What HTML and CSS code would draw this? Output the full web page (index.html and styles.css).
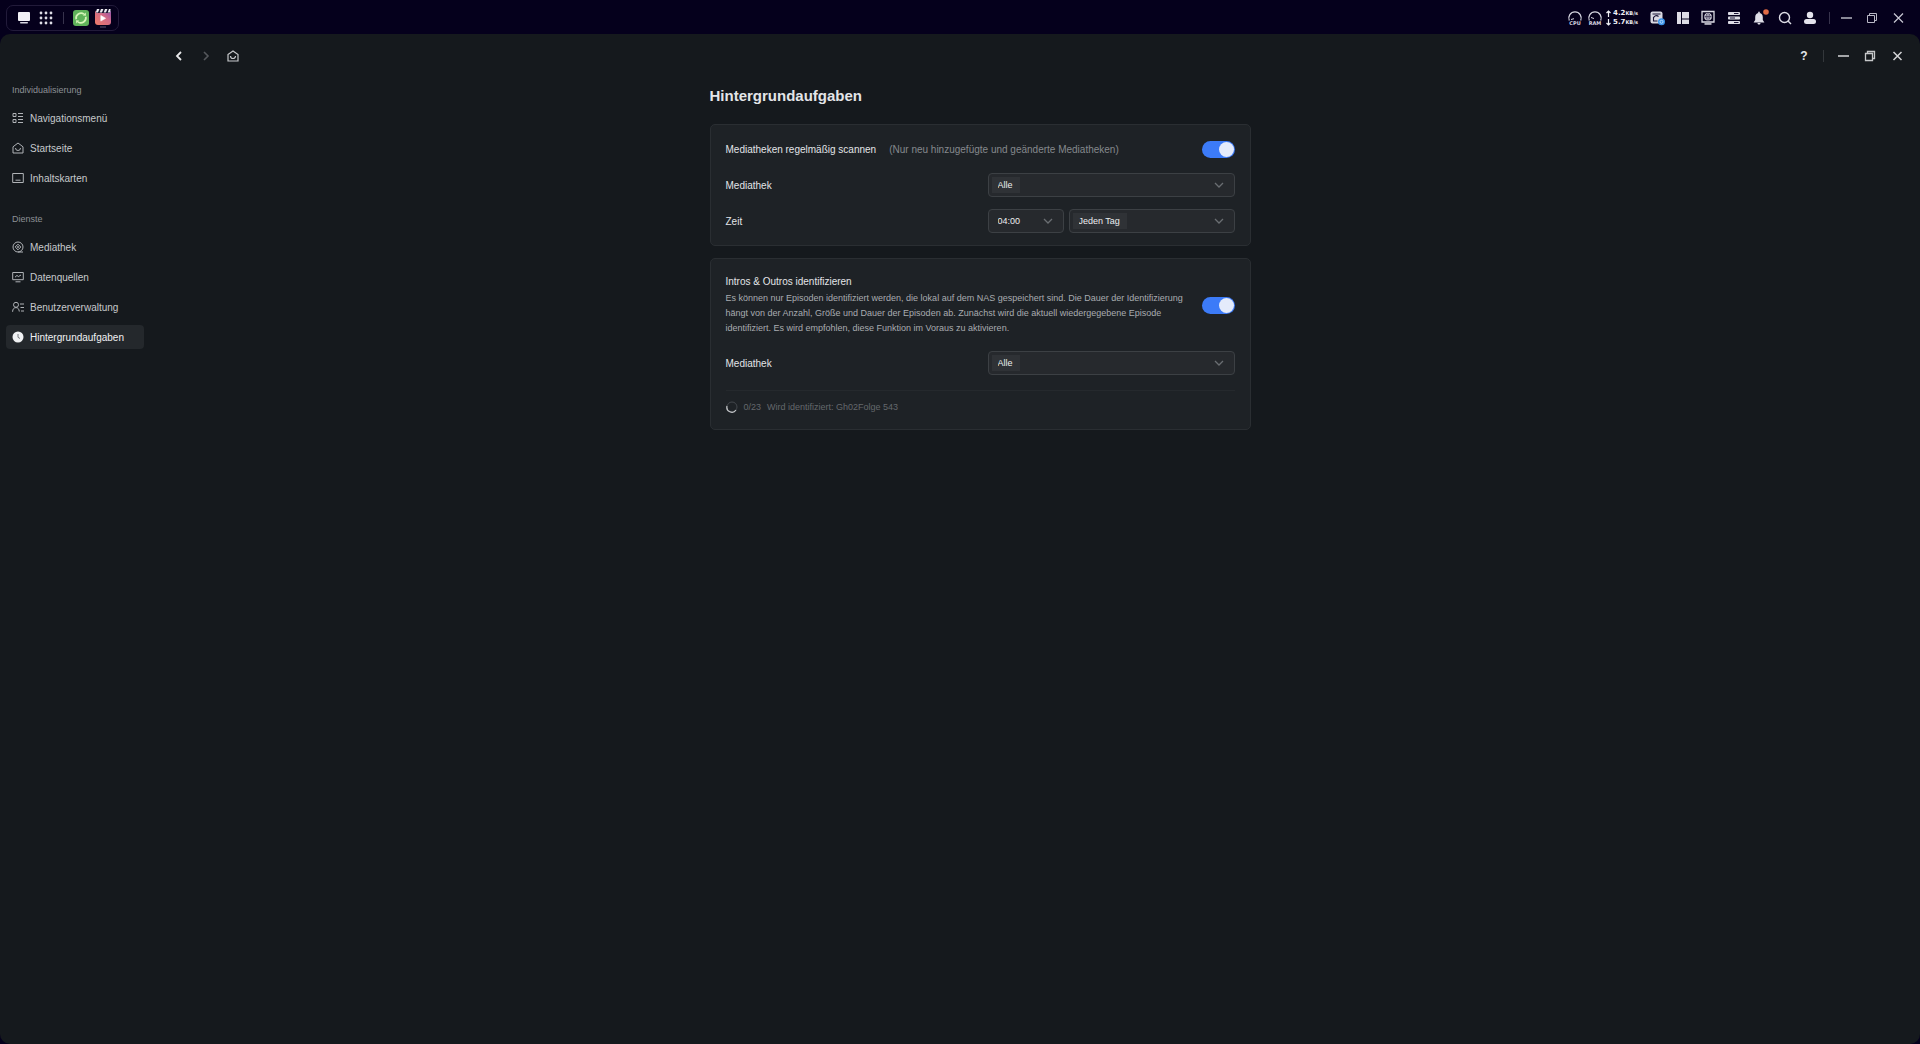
FILE: index.html
```html
<!DOCTYPE html>
<html lang="de">
<head>
<meta charset="utf-8">
<meta name="viewport" content="width=device-width, initial-scale=1">
<title>Hintergrundaufgaben</title>
<link rel="stylesheet" href="styles.css">
</head>
<body>
<header class="taskbar">
  <nav class="dock" aria-label="Dock">
    <button class="icon-btn" aria-label="Desktop"><svg width="14" height="14" viewBox="0 0 14 14"><rect x="1" y="1" width="12" height="9" rx="1" fill="#f1f0f5"/><rect x="3" y="11" width="8" height="1.4" rx=".7" fill="#d9d8e2"/></svg></button>
    <button class="icon-btn" aria-label="Apps"><svg width="14" height="14" viewBox="0 0 14 14" fill="#dedde6"><circle cx="2" cy="2" r="1.4"/><circle cx="7" cy="2" r="1.4"/><circle cx="12" cy="2" r="1.4"/><circle cx="2" cy="7" r="1.4"/><circle cx="7" cy="7" r="1.4"/><circle cx="12" cy="7" r="1.4"/><circle cx="2" cy="12" r="1.4"/><circle cx="7" cy="12" r="1.4"/><circle cx="12" cy="12" r="1.4"/></svg></button>
    <span class="divider"></span>
    <button class="icon-btn" aria-label="Synchronisierung"><svg width="16" height="16" viewBox="0 0 16 16"><rect width="16" height="16" rx="3" fill="#5fb35a"/><g fill="none" stroke="#d5f5b8" stroke-width="1.7"><path d="M3.2 9.2A5 5 0 0 1 11 4.1"/><path d="M12.8 6.8A5 5 0 0 1 5 11.9"/></g><path d="M9.8 5.6l3.2.2-.3-3.3zM6.2 10.4l-3.2-.2.3 3.3z" fill="#d5f5b8"/></svg></button>
    <button class="icon-btn" aria-label="Video"><svg width="16" height="20" viewBox="0 0 16 20"><defs><linearGradient id="clip" x1="0" y1="1" x2="1" y2="0"><stop offset="0" stop-color="#f07a68"/><stop offset=".6" stop-color="#d06a88"/><stop offset="1" stop-color="#8c4fb0"/></linearGradient></defs><rect y="2" width="16" height="15" rx="3" fill="url(#clip)"/><path d="M1 1h14v4H1z" fill="#17102c"/><path d="M2 1h2.4L3 4.6H.8zM6 1h2.400L7 4.600H4.700zM10 1h2.400L11 4.600H8.700zM14 1h1.600l-.4 3.600h-2.500z" fill="#ececf0"/><path d="M5.800 7.500v5.600l4.800-2.800z" fill="#fff" stroke="#fff" stroke-linejoin="round" stroke-width=".6"/><rect x="5" y="18.500" width="6" height="1" fill="#5a5570"/></svg></button>
  </nav>
  <div class="tray">
    <div class="meters">
      <svg width="16" height="16" viewBox="0 0 16 16"><path d="M2.300 10.500A6.200 6.200 0 1 1 13.700 10.500" fill="none" stroke="#d6d5e0" stroke-width="1.300"/><path d="M4 9.500l3-.8" stroke="#d6d5e0"/><text x="8" y="15" class="meter-text">CPU</text></svg>
      <svg width="16" height="16" viewBox="0 0 16 16"><path d="M2.300 10.500A6.200 6.200 0 1 1 13.700 10.500" fill="none" stroke="#d6d5e0" stroke-width="1.300"/><path d="M4 7.500l3 1" stroke="#d6d5e0"/><text x="8" y="15" class="meter-text">RAM</text></svg>
    </div>
    <div class="net">
      <div class="net-row"><svg width="5" height="7" viewBox="0 0 5 7"><path d="M2.500 7V1M.5 3l2-2 2 2" fill="none" stroke="#f0f0f5" stroke-width="1.200"/></svg><span>4.2<small>KB/s</small></span></div>
      <div class="net-row"><svg width="5" height="7" viewBox="0 0 5 7"><path d="M2.500 0v6M.5 4l2 2 2-2" fill="none" stroke="#f0f0f5" stroke-width="1.200"/></svg><span>5.7<small>KB/s</small></span></div>
    </div>
    <div class="tray-icons">
      <button class="icon-btn" aria-label="Speicher"><svg width="16" height="16" viewBox="0 0 16 16"><rect x="1.500" y="1.500" width="12" height="12" rx="2" fill="#d9d8e2"/><path d="M3.500 4h8M4.500 8a3 3 0 0 1 5-1.500M4.500 7v4h4" fill="none" stroke="#1b1436" stroke-width="1.100"/><circle cx="12.500" cy="11.800" r="3.500" fill="#3b93ea"/><circle cx="12.500" cy="11.800" r="1.500" fill="none" stroke="#b9dcff"/></svg></button>
      <button class="icon-btn" aria-label="Layout"><svg width="16" height="16" viewBox="0 0 16 16" fill="#dedde6"><rect x="2" y="2" width="4" height="12"/><rect x="7" y="2" width="7" height="6.500"/><rect x="7" y="9.500" width="7" height="4.500"/></svg></button>
      <button class="icon-btn" aria-label="Fernzugriff"><svg width="16" height="16" viewBox="0 0 16 16"><path d="M2 1.500h12v10.500H2z" fill="none" stroke="#dedde6" stroke-width="1.300"/><rect x="4.500" y="13.200" width="7" height="1.500" fill="#dedde6"/><circle cx="8" cy="6.700" r="3.800" fill="#dedde6"/><path d="M4.500 6.700h7M8 3v7.500M6.500 4q-1 2.700 0 5.400M9.500 4q1 2.700 0 5.400" fill="none" stroke="#1b1436" stroke-width=".7"/></svg></button>
      <button class="icon-btn" aria-label="Aufgaben"><svg width="16" height="16" viewBox="0 0 16 16" fill="#dedde6"><rect x="2" y="2" width="12" height="3" rx=".8"/><rect x="2" y="6.500" width="12" height="3" rx=".8"/><rect x="2" y="11" width="12" height="3" rx=".8"/><path d="M8 3.500h4.500M4 8h5M8 12.500h4.500" stroke="#1b1436"/></svg></button>
      <button class="icon-btn" aria-label="Benachrichtigungen"><svg width="20" height="20" viewBox="-2 0 20 20"><path d="M8 5c2.500 0 3.800 1.700 3.800 4.200v2.800l1.600 2.500H2.600L4.200 12V9.200C4.200 6.700 5.500 5 8 5zM7.200 3.800h1.600v2H7.200zM6.500 15h3c0 2-3 2-3 0z" fill="#dedde6"/><circle cx="15" cy="4" r="2.800" fill="#df6a45"/></svg></button>
      <button class="icon-btn" aria-label="Suche"><svg width="16" height="16" viewBox="0 0 16 16" fill="none" stroke="#dedde6" stroke-width="1.400"><circle cx="7.500" cy="7.500" r="5"/><path d="M11 11l3 3"/></svg></button>
      <button class="icon-btn" aria-label="Konto"><svg width="16" height="16" viewBox="0 0 16 16" fill="#e4e3ec"><circle cx="8" cy="5" r="3.200"/><rect x="2" y="9" width="12" height="5" rx="2.500"/></svg></button>
    </div>
    <span class="divider"></span>
    <div class="window-actions">
      <button class="icon-btn" aria-label="Minimieren"><svg width="16" height="16" viewBox="0 0 16 16"><path d="M3 8h11" stroke="#d3d2dc" stroke-width="1.300"/></svg></button>
      <button class="icon-btn" aria-label="Wiederherstellen"><svg width="16" height="16" viewBox="0 0 16 16" fill="none" stroke="#b9b8c6"><path d="M3.500 5.500h7v7h-7zM5.500 5.500v-2h7v7h-2"/></svg></button>
      <button class="icon-btn" aria-label="Schließen"><svg width="16" height="16" viewBox="0 0 16 16"><path d="M4 3.500l9 9M13 3.500l-9 9" stroke="#c9c8d4" stroke-width="1.200"/></svg></button>
    </div>
  </div>
</header>

<div class="window">
  <aside class="sidebar">
    <h2 class="group-title">Individualisierung</h2>
    <ul class="menu">
      <li><a class="menu-item" href="#nav"><svg class="menu-icon" viewBox="0 0 12 12"><path d="M1 1.500h3v3H1zM1 7.500h3v3H1zM6 1.500h5M6 4.500h5M6 7.500h5M6 10.500h5"/></svg>Navigationsmenü</a></li>
      <li><a class="menu-item" href="#home"><svg class="menu-icon" viewBox="0 0 12 12"><path d="M1 4.800L6 1l5 3.800V11H1zM3.500 6a2.500 2.500 0 0 0 5 0"/></svg>Startseite</a></li>
      <li><a class="menu-item" href="#cards"><svg class="menu-icon" viewBox="0 0 12 12"><path d="M.7 1.500h10.600v9H.7zM3.500 8.200h5"/></svg>Inhaltskarten</a></li>
    </ul>
    <h2 class="group-title">Dienste</h2>
    <ul class="menu">
      <li><a class="menu-item" href="#library"><svg class="menu-icon" viewBox="0 0 12 12"><circle cx="6" cy="6" r="5"/><path d="M6 3.200L8.800 6 6 8.800 3.200 6zM6 11h5"/><circle cx="6" cy="6" r=".6"/></svg>Mediathek</a></li>
      <li><a class="menu-item" href="#sources"><svg class="menu-icon" viewBox="0 0 12 12"><path d="M.7 1.500h10.600v7.200H.7zM3.500 10.800h5M3 6.200l2-1.800 1.300 1.200L9 4"/></svg>Datenquellen</a></li>
      <li><a class="menu-item" href="#users"><svg class="menu-icon" viewBox="0 0 12 12"><circle cx="4" cy="3.800" r="2.500"/><path d="M.6 10.800c0-2.800 1.400-4.200 3.400-4.200S7 8 7.300 10.500M8 3h4M8.500 6.500H12M9 10h3"/></svg>Benutzerverwaltung</a></li>
      <li><a class="menu-item active" href="#tasks" aria-current="page"><svg class="menu-icon" viewBox="0 0 12 12"><circle cx="6" cy="6" r="5.500" fill="#f0f1f3" stroke="none"/><path d="M6 3v3.300l2 1.200" stroke="#777b80"/></svg>Hintergrundaufgaben</a></li>
    </ul>
  </aside>

  <div class="pane">
    <div class="toolbar">
      <div class="history">
        <button class="icon-btn" aria-label="Zurück"><svg width="16" height="16" viewBox="0 0 16 16" fill="none" stroke="#e8e9eb" stroke-width="1.800"><path d="M10 4L6 8l4 4"/></svg></button>
        <button class="icon-btn" aria-label="Vor" disabled><svg width="16" height="16" viewBox="0 0 16 16" fill="none" stroke="#55585c" stroke-width="1.600"><path d="M6 4l4 4-4 4"/></svg></button>
        <button class="icon-btn" aria-label="Startseite"><svg width="16" height="16" viewBox="0 0 16 16" fill="none" stroke="#c6c8cb" stroke-width="1.200"><path d="M3 6.500L8 3l5 3.500V13H3zM5.500 8a2.500 2.500 0 0 0 5 0"/></svg></button>
      </div>
      <div class="app-actions">
        <button class="icon-btn help" aria-label="Hilfe">?</button>
        <span class="divider"></span>
        <button class="icon-btn" aria-label="Minimieren"><svg width="16" height="16" viewBox="0 0 16 16"><path d="M3 8h11" stroke="#d5d6d8" stroke-width="1.500"/></svg></button>
        <button class="icon-btn" aria-label="Wiederherstellen"><svg width="16" height="16" viewBox="0 0 16 16" fill="none" stroke="#c6c8ca" stroke-width="1.300"><path d="M3.500 5.500h7v7h-7zM5.500 5.500v-2h7v7h-2"/></svg></button>
        <button class="icon-btn" aria-label="Schließen"><svg width="16" height="16" viewBox="0 0 16 16"><path d="M4.500 4l8 8M12.500 4l-8 8" stroke="#d5d6d8" stroke-width="1.500"/></svg></button>
      </div>
    </div>

    <main class="scroller">
      <div class="content">
        <h1 class="title">Hintergrundaufgaben</h1>

        <section class="card">
          <div class="row">
            <div class="label-line"><label class="label" for="scan">Mediatheken regelmäßig scannen</label><span class="hint">(Nur neu hinzugefügte und geänderte Mediatheken)</span></div>
            <input class="switch" type="checkbox" role="switch" id="scan" checked>
          </div>
          <div class="row">
            <label class="label" for="scan-lib">Mediathek</label>
            <div class="fields">
              <div class="field"><select class="select tag-short" id="scan-lib"><option>Alle</option></select><svg class="chevron" viewBox="0 0 10 6"><path d="M1 1l4 4 4-4"/></svg></div>
            </div>
          </div>
          <div class="row">
            <label class="label" for="scan-time">Zeit</label>
            <div class="fields">
              <div class="field time"><select class="select" id="scan-time"><option>04:00</option></select><svg class="chevron" viewBox="0 0 10 6"><path d="M1 1l4 4 4-4"/></svg></div>
              <div class="field"><select class="select tag-long" aria-label="Wochentage"><option>Jeden Tag</option></select><svg class="chevron" viewBox="0 0 10 6"><path d="M1 1l4 4 4-4"/></svg></div>
            </div>
          </div>
        </section>

        <section class="card intros">
          <div class="row">
            <div>
              <label class="label" for="intros">Intros &amp; Outros identifizieren</label>
              <p class="description">Es können nur Episoden identifiziert werden, die lokal auf dem NAS gespeichert sind. Die Dauer der Identifizierung hängt von der Anzahl, Größe und Dauer der Episoden ab. Zunächst wird die aktuell wiedergegebene Episode identifiziert. Es wird empfohlen, diese Funktion im Voraus zu aktivieren.</p>
            </div>
            <input class="switch" type="checkbox" role="switch" id="intros" checked>
          </div>
          <div class="row">
            <label class="label" for="intro-lib">Mediathek</label>
            <div class="fields">
              <div class="field"><select class="select tag-short" id="intro-lib"><option>Alle</option></select><svg class="chevron" viewBox="0 0 10 6"><path d="M1 1l4 4 4-4"/></svg></div>
            </div>
          </div>
          <div class="status" role="status">
            <svg width="12" height="12" viewBox="0 0 12 12" fill="none"><circle cx="6" cy="6" r="5" stroke="#43474c"/><path d="M1 5A5 5 0 0 0 10 9" stroke="#c4c6c9" stroke-width="1.200"/></svg>
            <span>0/23</span><span>Wird identifiziert: Gh02Folge 543</span>
          </div>
        </section>
      </div>
    </main>
  </div>
</div>
</body>
</html>
```
FILE: styles.css
```css
* { box-sizing: border-box; }

body {
  margin: 0;
  min-height: 100vh;
  display: flex;
  flex-direction: column;
  background: #05001c;
  color: #e3e5e8;
  font-family: "Liberation Sans", Arial, sans-serif;
  font-size: 10px;
}

h1, h2, p, ul { margin: 0; padding: 0; }
ul { list-style: none; }
svg { display: block; flex: none; }

.icon-btn {
  display: flex;
  align-items: center;
  justify-content: center;
  width: 16px;
  height: 16px;
  padding: 0;
  border: 0;
  background: none;
  color: #e3e5e8;
  font: inherit;
}

.divider { width: 1px; height: 12px; background: #37334c; }

/* System bar */
.taskbar {
  display: flex;
  align-items: center;
  justify-content: space-between;
  height: 34px;
  padding: 2px 14px 0 6px;
}
.dock {
  display: flex;
  align-items: center;
  gap: 6px;
  height: 26px;
  padding: 0 7px 0 9px;
  border: 1px solid #221b3a;
  border-radius: 7px;
}
.dock .divider { margin: 0 3px; }
.tray { display: flex; align-items: center; gap: 11px; }
.meters { display: flex; gap: 4px; margin-right: -8px; }
.meter-text {
  fill: #d6d5e0;
  font: bold 5px "DejaVu Sans", sans-serif;
  text-anchor: middle;
}
.net { display: flex; flex-direction: column; color: #f0f0f5; font: bold 7px/9px "DejaVu Sans", sans-serif; }
.net-row { display: flex; align-items: center; gap: 2px; }
.net small { font-size: 5px; }
.tray-icons { display: flex; justify-content: space-between; width: 169px; }
.tray > .divider { margin-right: -3px; }
.window-actions { display: flex; gap: 10px; }

/* Application window */
.window {
  flex: 1;
  display: flex;
  background: #15191d;
  border-radius: 10px;
}
.sidebar { flex: none; width: 150px; padding: 50px 6px 20px; }
.group-title {
  padding: 0 6px;
  color: #8c9095;
  font-size: 9px;
  font-weight: normal;
  line-height: 12px;
}
.menu { display: flex; flex-direction: column; gap: 6px; margin: 10px 0 23px; }
.menu-item {
  display: flex;
  align-items: center;
  gap: 6px;
  height: 24px;
  padding: 0 6px;
  border-radius: 4px;
  color: #c6c9cc;
  text-decoration: none;
}
.menu-item.active { background: #24282c; color: #f0f1f3; }
.menu-icon { width: 12px; height: 12px; fill: none; stroke: #b0b3b7; }

.pane { flex: 1; display: flex; flex-direction: column; }
.toolbar {
  display: flex;
  align-items: center;
  justify-content: space-between;
  height: 43px;
  padding: 0 15px 0 21px;
}
.history, .app-actions { display: flex; align-items: center; gap: 11px; }
.app-actions .divider { background: #33373b; }
.help { font-size: 12px; font-weight: bold; }

.scroller { padding: 9px 110px 20px 0; }
.content {
  display: flex;
  flex-direction: column;
  gap: 12px;
  max-width: 541px;
  margin: 0 auto;
}
.title { margin-bottom: 6px; font-size: 15px; line-height: 20px; }

.card {
  display: flex;
  flex-direction: column;
  gap: 12px;
  padding: 12px 15px;
  border: 1px solid #2a2e32;
  border-radius: 5px;
  background: #1e2226;
}
.row { display: flex; align-items: center; justify-content: space-between; min-height: 24px; }
.label-line { display: flex; gap: 13px; }
.label { display: block; line-height: 15px; }
.hint { color: #85898d; line-height: 15px; }
.intros { gap: 15px; padding-top: 15px; }
.description { max-width: 464px; margin-top: 2px; color: #a9acb0; font-size: 9px; line-height: 15px; }

.fields { display: flex; gap: 5px; width: 247px; }
.field { position: relative; flex: 1; }
.field.time { flex: 0 0 76px; }
.select {
  display: block;
  width: 100%;
  height: 24px;
  padding: 0 24px 0 9px;
  border: 1px solid #3c4044;
  border-radius: 4px;
  appearance: none;
  background: #26292d;
  color: #eceef0;
  font: inherit;
  font-size: 9px;
}
.tag-short, .tag-long {
  background-image: linear-gradient(#2f3236, #2f3236);
  background-repeat: no-repeat;
  background-position: 3px center;
  background-size: 28px 16px;
}
.tag-long { background-size: 54px 16px; }
.chevron {
  position: absolute;
  top: 50%;
  right: 11px;
  width: 10px;
  height: 6px;
  margin-top: -3px;
  fill: none;
  stroke: #6a6e72;
  stroke-width: 1.3;
  pointer-events: none;
}

.switch {
  display: flex;
  align-items: center;
  flex: none;
  width: 33px;
  height: 17px;
  margin: 0;
  padding: 0 1px;
  border-radius: 9px;
  appearance: none;
  background: #44484c;
}
.switch::before {
  content: "";
  width: 15px;
  height: 15px;
  border-radius: 50%;
  background: #e4ebfb;
}
.switch:checked { justify-content: flex-end; background: #3c7bf8; }

.status {
  display: flex;
  align-items: center;
  gap: 6px;
  padding: 10px 0 4px;
  border-top: 1px solid #25292d;
  color: #64686c;
  font-size: 9px;
  line-height: 12px;
}
```
